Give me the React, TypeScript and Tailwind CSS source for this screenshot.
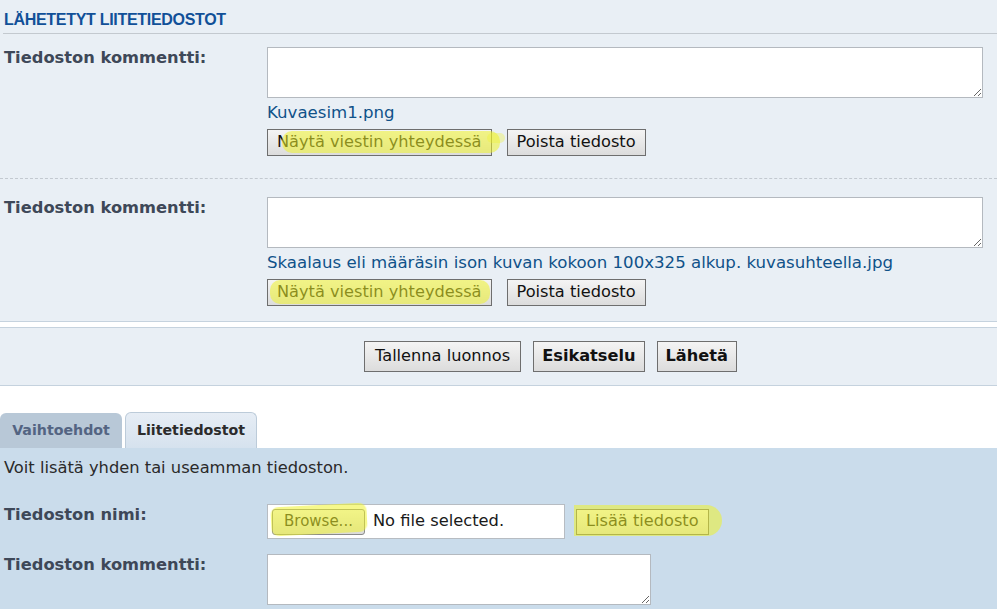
import React from 'react';

const font = { fontFamily: '"DejaVu Sans", Verdana, sans-serif' };

const btnBase =
  'border border-[#6e6e6e] bg-linear-to-b from-[#f4f4f4] to-[#dcdcdc] text-[16.2px] leading-none text-[#111] whitespace-nowrap';
const btn = `${btnBase} h-[27px] px-[9px]`;

const Marker = ({ className }: { className: string }) => (
  <span
    className={`pointer-events-none absolute bg-[#eef22c]/55 blur-[0.6px] ${className}`}
  />
);

const Label = ({ children }: { children: React.ReactNode }) => (
  <div className="w-[267px] shrink-0 pl-[4px] text-[16.3px] leading-[22px] font-bold text-[#3e4858]">
    {children}
  </div>
);

const AttachedFile = ({
  name,
  first,
  last,
}: {
  name: string;
  first?: boolean;
  last?: boolean;
}) => (
  <div
    className={`flex ${first ? 'pt-[13px]' : 'pt-[18px]'} ${
      last ? 'pb-[15px]' : 'pb-[22px] border-b border-dashed border-[#c3c9d0]'
    }`}
  >
    <Label>Tiedoston kommentti:</Label>
    <div className="flex flex-col">
      <textarea className="w-[716px] h-[51px] bg-white border border-[#b4b9bf] resize-y outline-none" />
      <a className="mt-[5px] text-[16.6px] leading-[20px] text-[#105289]">{name}</a>
      <div className="mt-[6px] flex gap-[15px]">
        <div className="relative">
          <button className={btn}>Näytä viestin yhteydessä</button>
          {first ? (
            <>
              <Marker className="left-[15px] top-[2px] w-[218px] h-[22px] rounded-[10px]" />
              <Marker className="left-[220px] top-[4px] w-[18px] h-[10px] rounded-full opacity-60" />
            </>
          ) : (
            <Marker className="left-[3px] top-[1px] w-[220px] h-[24px] rounded-[10px]" />
          )}
        </div>
        <button className={btn}>Poista tiedosto</button>
      </div>
    </div>
  </div>
);

export default function App() {
  return (
    <div className="w-full min-h-screen bg-white" style={font}>
      {/* lähetetyt liitteet */}
      <div className="bg-[#e9eff5] border-b border-[#c5d2de]">
        <div className="ml-[3px] pl-px pt-[11px] pb-[4px] border-b border-[#c3c9cf]">
          <h3
            className="text-[16px] leading-[18px] font-bold text-[#115098] tracking-[-0.3px]"
            style={{ fontFamily: '"Liberation Sans", Arial, sans-serif' }}
          >
            LÄHETETYT LIITETIEDOSTOT
          </h3>
        </div>
        <AttachedFile name="Kuvaesim1.png" first />
        <AttachedFile
          name="Skaalaus eli määräsin ison kuvan kokoon 100x325 alkup. kuvasuhteella.jpg"
          last
        />
      </div>

      {/* lähetysnapit */}
      <div className="mt-[5px] bg-[#e9eff5] border-y border-[#c5d2de] py-[13px] pl-[364px] flex gap-[12px]">
        <button className={`${btnBase} h-[31px] px-[10px]`}>Tallenna luonnos</button>
        <button className={`${btnBase} h-[31px] px-[8px] font-bold`}>Esikatselu</button>
        <button className={`${btnBase} h-[31px] px-[8px] font-bold`}>Lähetä</button>
      </div>

      {/* välilehdet */}
      <div className="mt-[26px] flex items-end gap-[3px]">
        <div className="h-[35px] w-[122px] rounded-t-[6px] bg-[#b8c8d7] flex items-center justify-center text-[14.2px] font-bold text-[#536482]">
          Vaihtoehdot
        </div>
        <div className="h-[36px] w-[132px] rounded-t-[6px] border border-b-0 border-[#bccbd9] bg-linear-to-b from-[#e6edf5] to-[#d6e2ee] flex items-center justify-center text-[14.2px] font-bold text-[#2b2b2b]">
          Liitetiedostot
        </div>
      </div>

      <div className="bg-[#cadceb] pt-[10px] pb-[8px]">
        <p className="pl-[4px] text-[16.3px] leading-[20px] text-[#2a2a2a]">
          Voit lisätä yhden tai useamman tiedoston.
        </p>

        <div className="mt-[26px] flex">
          <Label>Tiedoston nimi:</Label>
          <div className="flex items-center">
            <div className="w-[298px] h-[35px] bg-white border border-[#b7bcc2] flex items-center pl-[4px] gap-[8px]">
              <div className="relative">
                <span className="flex items-center h-[26px] px-[11px] rounded-[3px] border border-[#8a8a8a] bg-linear-to-b from-[#f6f6f6] to-[#dadada] text-[15px] text-[#111]">
                  Browse...
                </span>
                <Marker className="left-[-1px] top-[-4px] w-[96px] h-[29px] rounded-[8px] -rotate-3" />
              </div>
              <span className="text-[16.3px] text-[#1a1a1a]">No file selected.</span>
            </div>
            <div className="relative ml-[11px]">
              <button className={`${btnBase} h-[26px] px-[9px]`}>Lisää tiedosto</button>
              <Marker className="left-[-2px] top-[-4px] w-[148px] h-[31px] rounded-l-[6px] rounded-r-full" />
            </div>
          </div>
        </div>

        <div className="mt-[15px] flex">
          <Label>Tiedoston kommentti:</Label>
          <textarea className="w-[384px] h-[51px] bg-white border border-[#b4b9bf] resize-y outline-none" />
        </div>
      </div>
    </div>
  );
}
